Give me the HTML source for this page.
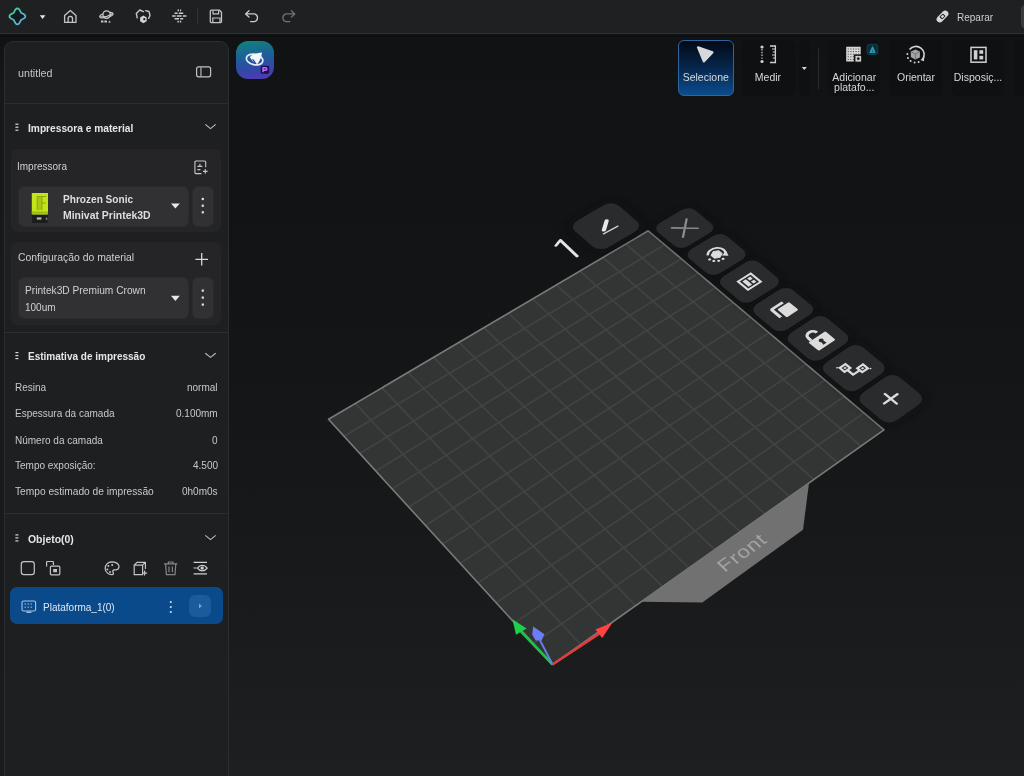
<!DOCTYPE html>
<html><head><meta charset="utf-8">
<style>
*{box-sizing:border-box;margin:0;padding:0}
html,body{width:1024px;height:776px;overflow:hidden;background:linear-gradient(180deg,#111214 0px,#131416 300px,#17181a 520px,#1e1f21 776px);font-family:"Liberation Sans",sans-serif;color:#d0d0d0}
.a{position:absolute}
.t{position:absolute;line-height:13.4px;white-space:nowrap;font-size:10px;will-change:transform}
.b{font-weight:bold}
svg{position:absolute;overflow:visible}
#hdr{left:0;top:0;width:1024px;height:34px;background:#1f2022;border-bottom:1px solid #2f3032}
#panel{left:4px;top:41px;width:225px;height:760px;background:#1e1f21;border:1px solid #2c2d30;border-radius:9px 9px 0 0}
.div{position:absolute;left:4px;width:225px;height:1px;background:#2c2d30}
.card{position:absolute;left:11px;width:210px;background:#252527;border-radius:7px}
.dd{position:absolute;background:#313134;border-radius:6px;border:1px solid #2b2b2e}
.tb{position:absolute;top:40px;height:56px;background:#0f1012;border-radius:6px}
.tbl{position:absolute;width:100%;text-align:center;font-size:10.5px;line-height:10px;color:#d8d8d8;will-change:transform}
</style></head><body>
<div id="hdr" class="a"></div>
<!-- header icons -->
<svg width="1024" height="34" style="left:0;top:0">
  <defs>
    <linearGradient id="lg" x1="0" y1="0" x2="1" y2="1">
      <stop offset="0" stop-color="#3ed89a"/><stop offset="0.55" stop-color="#5ab8c0"/><stop offset="1" stop-color="#7a9ee8"/>
    </linearGradient>
  </defs>
  <path d="M17.40 8.35 C19.70 8.35 20.40 11.75 21.00 12.75 C22.00 13.35 25.40 14.05 25.40 16.35 C25.40 18.65 22.00 19.35 21.00 19.95 C20.40 20.95 19.70 24.35 17.40 24.35 C15.10 24.35 14.40 20.95 13.80 19.95 C12.80 19.35 9.40 18.65 9.40 16.35 C9.40 14.05 12.80 13.35 13.80 12.75 C14.40 11.75 15.10 8.35 17.40 8.35Z" fill="#101a20" stroke="url(#lg)" stroke-width="1.7"/>
  <path d="M39.8 15.2 L45.4 15.2 L42.6 19Z" fill="#e8e8e8"/>
  <!-- home -->
  <path d="M64.6 15.6 L70.3 10.4 L76 15.6 L76 22.3 L64.6 22.3Z" fill="none" stroke="#c4c4c4" stroke-width="1.3" stroke-linejoin="round"/>
  <path d="M68.1 22.3 L68.1 18.6 A2.2 2.2 0 0 1 72.5 18.6 L72.5 22.3" fill="none" stroke="#c4c4c4" stroke-width="1.3"/>
  <!-- planet -->
  <ellipse cx="106.4" cy="15.2" rx="6.9" ry="2.1" transform="rotate(-14 106.4 15.2)" fill="none" stroke="#c8c8c8" stroke-width="1.2"/>
  <circle cx="106.6" cy="14.6" r="3.7" fill="#1f2022" stroke="#c8c8c8" stroke-width="1.3"/>
  <path d="M100.2 16.8 Q106.6 17.6 112.6 13.4" fill="none" stroke="#c8c8c8" stroke-width="1.2"/>
  <path d="M101 20.6 h2.4 v1.9 h-2.4z M104.4 20.6 h2.6 v1.9 h-2.6z M108.2 22.5 l1.3-2 l1.3 2z" fill="#c8c8c8"/>
  <!-- cloud hex -->
  <path d="M137.2 17.8 L136.3 13.4 L139.8 10 L143.4 11.6 M145.6 10.6 L148.9 11.5 L150 15.2 L148.7 18.4" fill="none" stroke="#c8c8c8" stroke-width="1.4" stroke-linecap="round" stroke-linejoin="round"/>
  <polygon points="146.69,21.30 143.40,23.20 140.11,21.30 140.11,17.50 143.40,15.60 146.69,17.50" fill="#d2d2d2"/>
  <circle cx="144.3" cy="19.2" r="1.1" fill="#1f2022"/>
  <!-- slice diamond -->
  <g stroke="#cfcfcf" stroke-width="1.6">
    <path d="M177.6 10.4 h1.4 M180 10.4 h1.2"/>
    <path d="M174.6 13.2 h3 M178.8 13.2 h4.4"/>
    <path d="M172.2 16 h3.4 M176.8 16 h4.8 M182.8 16 h3.6"/>
    <path d="M174.6 18.8 h4.4 M180.2 18.8 h3"/>
    <path d="M177.4 21.6 h1.4 M179.8 21.6 h1.4"/>
  </g>
  <rect x="197" y="8.5" width="1" height="15" fill="#34353a"/>
  <!-- save -->
  <path d="M210.3 11.2 a1 1 0 0 1 1-1 h8.2 l2 2 v9.4 a1 1 0 0 1 -1 1 h-9.2 a1 1 0 0 1 -1-1z" fill="none" stroke="#c4c4c4" stroke-width="1.3"/>
  <path d="M213 10.4 v3.4 h5.6 v-3.4 M212.8 22.2 v-4.2 h7.2 v4.2" fill="none" stroke="#c4c4c4" stroke-width="1.2"/>
  <!-- undo -->
  <path d="M249 10.8 L245.6 13.9 L249 17 M246 13.9 H254.6 A4 4 0 0 1 254.6 21.6 H250.5" fill="none" stroke="#cacaca" stroke-width="1.3" stroke-linecap="round" stroke-linejoin="round"/>
  <!-- redo -->
  <path d="M291.4 10.8 L294.8 13.9 L291.4 17 M294.4 13.9 H285.8 A4 4 0 0 0 285.8 21.6 H289.9" fill="none" stroke="#707174" stroke-width="1.3" stroke-linecap="round" stroke-linejoin="round"/>
  <!-- band-aid -->
  <g transform="rotate(-45 942.5 16.5)">
    <rect x="935.5" y="13.3" width="14" height="6.4" rx="3.2" fill="#d8d8d8"/>
    <rect x="940" y="14.6" width="5" height="3.8" rx="0.8" fill="#1f2023"/>
    <rect x="941" y="15.4" width="3" height="2.2" fill="#d8d8d8"/>
  </g>
  <rect x="1021" y="4.5" width="12" height="24.5" rx="5" fill="#3a3b3e"/>
</svg>
<div class="t" style="left:956.5px;top:10.7px;font-size:10px;color:#cfcfcf">Reparar</div>

<!-- left panel -->
<div class="a" style="left:0;top:35px;width:1024px;height:2px;background:#0d0e10"></div>
<div class="a" style="left:0;top:37px;width:4px;height:740px;background:linear-gradient(180deg,#111214,#17181a 60px,#1a1b1d)"></div>
<div id="panel" class="a"></div>
<div class="t" style="left:17.5px;top:67px;font-size:10.7px;color:#c4c4c4">untitled</div>
<svg width="20" height="20" style="left:0;top:0">
</svg>
<svg width="230" height="740" style="left:0;top:0">
  <rect x="196.6" y="66.8" width="14" height="10" rx="2" fill="none" stroke="#c4c4c4" stroke-width="1.2"/>
  <rect x="200.4" y="67.2" width="1.1" height="9.2" fill="#c4c4c4"/>
  <!-- handles -->
  <g fill="#d8d8d8">
    <rect x="15.4" y="123.6" width="3" height="1.2"/><rect x="15.4" y="126.6" width="3" height="1.2"/><rect x="15.4" y="129.6" width="3" height="1.2"/>
    <rect x="15.4" y="352" width="3" height="1.2"/><rect x="15.4" y="355" width="3" height="1.2"/><rect x="15.4" y="358" width="3" height="1.2"/>
    <rect x="15.4" y="534.3" width="3" height="1.2"/><rect x="15.4" y="537.3" width="3" height="1.2"/><rect x="15.4" y="540.3" width="3" height="1.2"/>
  </g>
  <g fill="none" stroke="#bdbdbd" stroke-width="1.1">
    <path d="M205.3 124.4 L210.5 128.6 L215.7 124.4"/>
    <path d="M205.3 353.2 L210.5 357.4 L215.7 353.2"/>
    <path d="M205.3 535.4 L210.5 539.6 L215.7 535.4"/>
  </g>
</svg>
<div class="div" style="top:103px"></div>
<div class="t b" style="font-size:10.2px;left:28px;top:121.5px;color:#e6e6e6">Impressora e material</div>

<div class="card" style="top:149px;height:83px"></div>
<div class="t" style="left:17.4px;top:159.5px;color:#cfcfcf">Impressora</div>
<svg width="230" height="340" style="left:0;top:0">
  <path d="M201.5 173.6 h-5.6 a1 1 0 0 1 -1-1 v-10.6 a1 1 0 0 1 1-1 h8.8 a1 1 0 0 1 1 1 v5.2" fill="none" stroke="#c8c8c8" stroke-width="1.1"/>
  <path d="M197.4 166.4 h5 M199.9 163.8 v3 M197.4 169.6 h3" stroke="#c8c8c8" stroke-width="1.1"/>
  <path d="M203 171.4 h4.6 M205.3 169.1 v4.6" stroke="#c8c8c8" stroke-width="1.1"/>
</svg>
<div class="dd" style="left:18px;top:185.5px;width:171px;height:41px"></div>
<div class="dd" style="left:192px;top:185.5px;width:21.5px;height:41.5px"></div>
<svg width="230" height="340" style="left:0;top:0">
  <!-- printer image -->
  <path d="M31.8 193 h16.2 v20.6 l-0.8 1.4 h-14.6 l-0.8-1.4z" fill="#c4e41a"/>
  <path d="M37.2 196.5 h4.8 v13.5 h-4.8z" fill="#a8c614"/>
  <path d="M37.2 196.5 v13.5 M42 196.5 v13.5 M37.2 196.5 h9 M42 203 h4" stroke="#7e9a0a" stroke-width="0.8" fill="none"/>
  <path d="M31.8 211.5 h16.2 v2.2 h-16.2z" fill="#9cb812"/>
  <rect x="32.2" y="214.6" width="15.4" height="8.4" fill="#1b1c1e"/>
  <rect x="36.8" y="217.4" width="4.6" height="2.2" fill="#b8b8b8"/>
  <path d="M45.4 219.6 l1.2-2.4 l1 2.4z" fill="#9a9a9a"/>
  <path d="M171 203.4 h8.8 l-4.4 5.2z M171 295.8 h8.8 l-4.4 5.2z" fill="#e8e8e8"/>
  <g fill="#e0e0e0">
    <rect x="201.7" y="197.9" width="2.2" height="2.2"/><rect x="201.7" y="204.6" width="2.2" height="2.2"/><rect x="201.7" y="211.2" width="2.2" height="2.2"/>
    <rect x="201.7" y="289.5" width="2.2" height="2.2"/><rect x="201.7" y="296.5" width="2.2" height="2.2"/><rect x="201.7" y="303.5" width="2.2" height="2.2"/>
  </g>
</svg>
<div class="t b" style="font-size:10.1px;left:63px;top:192.5px;color:#dedede">Phrozen Sonic</div>
<div class="t b" style="font-size:10.45px;left:63px;top:209px;color:#dedede">Minivat Printek3D</div>

<div class="card" style="top:241.5px;height:83.5px"></div>
<div class="t" style="font-size:10.4px;left:17.5px;top:251.3px;color:#cfcfcf">Configuração do material</div>
<div class="dd" style="left:17.5px;top:276.5px;width:171.5px;height:42px"></div>
<div class="dd" style="left:192px;top:276.5px;width:21.5px;height:42px"></div>
<svg width="230" height="340" style="left:0;top:0">
  <path d="M195.4 259.3 h12.6 M201.7 253 v12.6" stroke="#d8d8d8" stroke-width="1.3"/>
  <path d="M171 295.8 h8.8 l-4.4 5.2z" fill="#e8e8e8"/>
  <g fill="#e0e0e0">
    <rect x="201.7" y="289.5" width="2.2" height="2.2"/><rect x="201.7" y="296.5" width="2.2" height="2.2"/><rect x="201.7" y="303.5" width="2.2" height="2.2"/>
  </g>
</svg>
<div class="t" style="font-size:10.2px;left:24.7px;top:284.4px;color:#d0d0d0">Printek3D Premium Crown</div>
<div class="t" style="left:24.7px;top:301.4px;color:#d0d0d0">100um</div>

<div class="div" style="top:332px"></div>
<div class="t b" style="left:28px;top:350.2px;color:#e6e6e6">Estimativa de impressão</div>

<div class="t" style="left:14.6px;top:381.2px;color:#c8c8c8">Resina</div>
<div class="t" style="font-size:10px;left:14.6px;top:407px;color:#c8c8c8">Espessura da camada</div>
<div class="t" style="left:14.6px;top:433.5px;color:#c8c8c8">Número da camada</div>
<div class="t" style="left:14.6px;top:459.3px;color:#c8c8c8">Tempo exposição:</div>
<div class="t" style="font-size:10.2px;left:14.6px;top:485.2px;color:#c8c8c8">Tempo estimado de impressão</div>
<div class="t" style="right:806px;top:381.2px;color:#c8c8c8">normal</div>
<div class="t" style="right:806px;top:407px;color:#c8c8c8">0.100mm</div>
<div class="t" style="right:806px;top:433.5px;color:#c8c8c8">0</div>
<div class="t" style="right:806px;top:459.3px;color:#c8c8c8">4.500</div>
<div class="t" style="right:806px;top:485.2px;color:#c8c8c8">0h0m0s</div>

<div class="div" style="top:513px"></div>
<div class="t b" style="font-size:10.45px;left:28px;top:532.5px;color:#e6e6e6">Objeto(0)</div>
<svg width="230" height="640" style="left:0;top:0">
  <g fill="none" stroke="#c4c4c4" stroke-width="1.2">
    <rect x="21.3" y="561.6" width="13" height="13" rx="2.6"/>
    <path d="M46.6 566.5 v-4.2 a0.8 0.8 0 0 1 0.8-0.8 h5.2 a0.8 0.8 0 0 1 0.8 0.8 v2.6"/>
    <rect x="50.4" y="566.2" width="9.4" height="8.6" rx="1"/>
    <path d="M111.6 561.8 a6.6 6.4 0 1 0 0.4 12.8 c1.6 0 1.8-1.4 1-2.4 c-0.8-1 0-2.4 1.4-2.4 h1.6 a3.4 3.4 0 0 0 3-3.4 c0-2.6-3.4-4.6-7.4-4.6z"/>
    <path d="M134.2 565.2 l2.8-2.8 h8.4 v6.6 M134.2 565.2 h8.4 v9.4 h-8.4z M142.6 565.2 l2.8-2.8"/>
    <path d="M144.6 570.6 v5 M142.1 573.1 h5"/>
    <path d="M164 563.8 h13.4 M168.4 563.6 v-1.6 h4.6 v1.6 M165.6 564 l0.8 10.6 h8.6 l0.8-10.6 M169 566.6 v5.6 M172.4 566.6 v5.6" stroke="#858585"/>
  </g>
  <rect x="49.2" y="568.6" width="3.6" height="3.6" fill="#c4c4c4" opacity="0"/>
  <g fill="#c4c4c4">
    <circle cx="108.4" cy="566" r="1"/><circle cx="112.2" cy="565" r="1"/><circle cx="107.4" cy="569.6" r="1"/><circle cx="110" cy="572" r="1"/>
    <rect x="53.2" y="569" width="3.8" height="3.2"/>
  </g>
  <g fill="none" stroke="#d0d0d0" stroke-width="1.2">
    <path d="M193.6 562.4 h13.4 M193.6 573.8 h13.4 M193.6 568 h3"/>
    <path d="M197.4 568.1 c2.6-3.6 7.2-3.6 9.8 0 c-2.6 3.6-7.2 3.6-9.8 0z"/>
  </g>
  <circle cx="202.2" cy="568.1" r="1.7" fill="#d0d0d0"/>
</svg>

<div class="a" style="left:10px;top:587px;width:212.5px;height:36.6px;background:#0a4a8a;border-radius:7px"></div>
<div class="a" style="left:188.7px;top:594.6px;width:22.5px;height:22.7px;background:#1a5b9c;border-radius:6px"></div>
<svg width="230" height="640" style="left:0;top:0">
  <rect x="22" y="601" width="13.6" height="10" rx="1.6" fill="none" stroke="#a8c4e4" stroke-width="1.1"/>
  <g fill="#a8c4e4">
    <rect x="24.6" y="603.4" width="1.2" height="1.2"/><rect x="27.6" y="603.4" width="1.2" height="1.2"/><rect x="30.6" y="603.4" width="1.2" height="1.2"/>
    <rect x="24.6" y="606.6" width="1.2" height="1.2"/><rect x="27.6" y="606.6" width="1.2" height="1.2"/><rect x="30.6" y="606.6" width="1.2" height="1.2"/>
    <rect x="26.4" y="611.6" width="5" height="1.3"/>
  </g>
  <g fill="#c8dcf0">
    <circle cx="170.8" cy="602" r="1.1"/><circle cx="170.8" cy="607" r="1.1"/><circle cx="170.8" cy="612" r="1.1"/>
  </g>
  <path d="M199 603.6 l2.8 2.4 l-2.8 2.4z" fill="#7aa6d6"/>
</svg>
<div class="t" style="font-size:10px;left:42.7px;top:601px;color:#dce8f4">Plataforma_1(0)</div>

<!-- 3D viewport -->
<svg width="1024" height="776" style="left:0;top:0">
  <polygon points="328.5,419.3 648.2,230.8 884.0,429.8 552.6,664.5" fill="#333534"/>
  <path d="M355.4 403.4L580.8 644.5M381.9 387.8L608.5 624.9M408.0 372.4L635.7 605.6M433.7 357.3L662.5 586.7M459.0 342.4L688.8 568.0M483.9 327.7L714.6 549.7M508.4 313.2L740.1 531.7M532.6 299.0L765.0 514.0M556.4 284.9L789.6 496.6M579.9 271.1L813.8 479.5M603.0 257.5L837.6 462.7M625.8 244.0L861.0 446.1M344.0 436.2L664.7 244.7M359.7 453.5L681.4 258.8M375.8 471.0L698.4 273.2M392.1 488.9L715.6 287.7M408.7 507.0L733.2 302.5M425.5 525.5L751.0 317.5M442.7 544.3L769.1 332.8M460.2 563.4L787.4 348.3M478.0 582.9L806.1 364.1M496.2 602.7L825.1 380.1M514.6 622.9L844.4 396.4M533.4 643.5L864.0 413.0" stroke="#414342" stroke-width="1.7" fill="none"/>
  <polygon points="328.5,419.3 648.2,230.8 884.0,429.8 552.6,664.5" fill="none" stroke="#7a7a7b" stroke-width="1.6" stroke-linejoin="round"/>
  <!-- axes -->
  <path d="M552.6 664.5 L521 631.5" stroke="#22c04a" stroke-width="2.6"/>
  <path d="M512.4 619.2 L516 634.8 L526.6 628.4Z" fill="#1fd04c"/>
  <path d="M552.6 664.5 L539.8 640" stroke="#6a7ef0" stroke-width="1.8"/>
  <path d="M533.2 626.4 L544.4 634.2 L541.6 640.4 L535.6 640.4 L532.2 634.4Z" fill="#6b7df8"/>
  <path d="M552.6 664.5 L599.2 633.6" stroke="#e23c3c" stroke-width="2.6"/>
  <path d="M612.6 622.6 L595.4 629.6 L602.2 638Z" fill="#ff4242"/>
</svg>
<!-- app logo -->
<div class="a" style="left:236px;top:40.5px;width:37.5px;height:38.5px;border-radius:12px;background:linear-gradient(172deg,#11847a 0%,#1d5f98 40%,#2f4aa8 68%,#5538b4 100%)"></div>
<svg width="40" height="40" style="left:236px;top:40px">
  <ellipse cx="18.6" cy="19.5" rx="8.4" ry="5.2" transform="rotate(12 18.6 19.5)" fill="none" stroke="#e6eaf6" stroke-width="1.7"/>
  <path d="M13.8 17.2 C16 14.5 21 13 26 12.6 C25.4 17 24 21.5 21 24.4 L19.4 22 L17 21.4Z" fill="#f6f6fa"/>
  <path d="M16.5 19.5 l2.4 2.2" stroke="#2a4fa0" stroke-width="1.2"/>
  <rect x="24.6" y="25.8" width="8.6" height="8" rx="1.6" fill="#250a50"/>
  <path d="M27 32.3 v-4.6 h2.6 a1.3 1.3 0 0 1 0 2.6 h-2.6" fill="none" stroke="#b274ff" stroke-width="1.4"/>
</svg>

<!-- toolbar -->
<div class="tb" style="left:678px;width:55.5px;background:linear-gradient(180deg,#030a16 0%,#06264c 50%,#0b4d8e 100%);border:1px solid #2f659e"></div>
<svg width="30" height="30" style="left:690px;top:40px">
  <path d="M8 7.4 L22.4 12.4 L13.8 21.4Z" fill="#d8d8dc" stroke="#d8d8dc" stroke-width="2.2" stroke-linejoin="round"/>
</svg>
<div class="tbl" style="left:678px;width:55.5px;top:71.5px;position:absolute">Selecione</div>
<div class="tb" style="left:741px;width:54px"></div>
<div class="tb" style="left:798.5px;width:12px"></div>
<svg width="80" height="30" style="left:740px;top:40px">
  <circle cx="22" cy="7" r="1.6" fill="#d0d0d0"/><circle cx="22" cy="21.5" r="1.6" fill="#d0d0d0"/>
  <path d="M22 9 v11" stroke="#d0d0d0" stroke-width="1.2" stroke-dasharray="1.4 1.4"/>
  <path d="M30 6 h5.4 v16.5 h-5.4" fill="none" stroke="#d0d0d0" stroke-width="1.3"/>
  <path d="M32 9 h3.4 M32.8 12 h2.6 M32 15 h3.4 M32.8 18 h2.6" stroke="#d0d0d0" stroke-width="1.1"/>
  <path d="M61.8 27 h5 l-2.5 3z" fill="#d8d8d8"/>
</svg>
<div class="tbl" style="left:741px;width:54px;top:71.5px">Medir</div>
<div class="a" style="left:818px;top:48px;width:1px;height:41px;background:#2a2b2e"></div>

<div class="tb" style="left:827.5px;width:52.5px"></div>
<svg width="60" height="30" style="left:827px;top:40px">
  <path d="M19.2 6.8 H33.7 V14.4 H26.8 V21.5 H19.2Z" fill="#d6d6d6"/>
  <g fill="#3a3a3a"><rect x="20.7" y="8.55" width="1.1" height="0.9"/><rect x="23.3" y="8.55" width="1.1" height="0.9"/><rect x="25.9" y="8.55" width="1.1" height="0.9"/><rect x="28.5" y="8.55" width="1.1" height="0.9"/><rect x="31.1" y="8.55" width="1.1" height="0.9"/><rect x="20.7" y="11.15" width="1.1" height="0.9"/><rect x="23.3" y="11.15" width="1.1" height="0.9"/><rect x="25.9" y="11.15" width="1.1" height="0.9"/><rect x="28.5" y="11.15" width="1.1" height="0.9"/><rect x="31.1" y="11.15" width="1.1" height="0.9"/><rect x="20.7" y="13.75" width="1.1" height="0.9"/><rect x="23.3" y="13.75" width="1.1" height="0.9"/><rect x="25.9" y="13.75" width="1.1" height="0.9"/><rect x="28.5" y="13.75" width="1.1" height="0.9"/><rect x="31.1" y="13.75" width="1.1" height="0.9"/><rect x="20.7" y="16.35" width="1.1" height="0.9"/><rect x="23.3" y="16.35" width="1.1" height="0.9"/><rect x="25.9" y="16.35" width="1.1" height="0.9"/><rect x="20.7" y="18.95" width="1.1" height="0.9"/><rect x="23.3" y="18.95" width="1.1" height="0.9"/><rect x="25.9" y="18.95" width="1.1" height="0.9"/></g>
  <rect x="27.9" y="15.3" width="6.8" height="6.8" fill="#d0d0d0" stroke="#0f1012" stroke-width="1"/>
  <circle cx="31.3" cy="18.7" r="1.4" fill="#202020"/>
  <rect x="40.2" y="4.3" width="10.6" height="10.2" rx="2" fill="#0a2a36" stroke="#17495a" stroke-width="0.8"/>
  <path d="M42.8 12.6 L45.5 6.6 L48.2 12.6Z" fill="#2a9cb0" stroke="#2a9cb0" stroke-width="1" stroke-linejoin="round"/><path d="M44.8 11.6 L45.5 10 L46.2 11.6Z" fill="#0a2a36"/>
</svg>
<div class="tbl" style="left:827.5px;width:52.5px;top:71.5px">Adicionar</div>
<div class="tbl" style="left:827.5px;width:52.5px;top:82.3px">platafo...</div>

<div class="tb" style="left:889px;width:54px"></div>
<svg width="60" height="30" style="left:889px;top:40px">
  <path d="M20.5 9.6 A8 8 0 1 1 33.5 19.5" fill="none" stroke="#d0d0d0" stroke-width="1.6"/>
  <path d="M31.4 20 l3.6 1.2 l0.2-4z" fill="#d0d0d0"/>
  <g fill="#d0d0d0"><circle cx="18.4" cy="14" r="1"/><circle cx="19" cy="18" r="1"/><circle cx="21.6" cy="21" r="1"/><circle cx="25.6" cy="22.6" r="1"/><circle cx="29.6" cy="22" r="1"/></g>
  <path d="M21.8 11.6 L26.6 9.4 L31 11.8 L30.8 17.4 L26.2 19.6 L21.8 17Z" fill="#a4a4a4"/>
  <path d="M21.8 11.6 L26.4 14 L31 11.8 M26.4 14 v5.6" fill="none" stroke="#6a6a6a" stroke-width="0.8"/>
</svg>
<div class="tbl" style="left:889px;width:54px;top:71.5px">Orientar</div>

<div class="tb" style="left:952px;width:52px"></div>
<svg width="60" height="30" style="left:952px;top:40px">
  <rect x="19" y="7.4" width="15" height="14.8" fill="none" stroke="#d0d0d0" stroke-width="1.5"/>
  <rect x="21.8" y="10.2" width="3.6" height="9.2" fill="#d0d0d0"/>
  <rect x="27.4" y="10.2" width="3.8" height="3.6" fill="#d0d0d0"/>
  <rect x="27.4" y="15.8" width="3.8" height="3.6" fill="#d0d0d0"/>
</svg>
<div class="tbl" style="left:952px;width:52px;top:71.5px">Disposiç...</div>
<div class="tb" style="left:1013.5px;width:30px"></div>

<!-- plate-side buttons -->
<svg width="1024" height="776" style="left:0;top:0"><polygon points="641.1,601.8 702.3,602.6 803.0,529.8 809.0,482.9" fill="#717172"/>
<g transform="matrix(0.8273 -0.5921 0.6526 0.6219 711.30 552.96)"><text x="21" y="27" text-anchor="middle" font-size="21" fill="#a4a4a4" font-family="Liberation Sans" textLength="52">Front</text></g>
<defs><filter id="sh" x="-30%" y="-30%" width="160%" height="160%"><feGaussianBlur stdDeviation="3.2"/></filter></defs>
<g transform="matrix(0.9290 -0.5535 0.7014 0.5811 652.18 227.53)"><rect x="-4" y="-4" width="48" height="48" rx="11.5" fill="#0a0a0c" opacity="0.35" filter="url(#sh)"/></g>
<g transform="matrix(0.9326 -0.5697 0.7219 0.5982 683.53 253.90)"><rect x="-4" y="-4" width="48" height="48" rx="11.5" fill="#0a0a0c" opacity="0.35" filter="url(#sh)"/></g>
<g transform="matrix(0.9361 -0.5866 0.7434 0.6160 715.80 281.03)"><rect x="-4" y="-4" width="48" height="48" rx="11.5" fill="#0a0a0c" opacity="0.35" filter="url(#sh)"/></g>
<g transform="matrix(0.9394 -0.6043 0.7658 0.6346 749.05 308.99)"><rect x="-4" y="-4" width="48" height="48" rx="11.5" fill="#0a0a0c" opacity="0.35" filter="url(#sh)"/></g>
<g transform="matrix(0.9425 -0.6228 0.7893 0.6540 783.30 337.79)"><rect x="-4" y="-4" width="48" height="48" rx="11.5" fill="#0a0a0c" opacity="0.35" filter="url(#sh)"/></g>
<g transform="matrix(0.9452 -0.6422 0.8139 0.6744 818.61 367.48)"><rect x="-4" y="-4" width="48" height="48" rx="11.5" fill="#0a0a0c" opacity="0.35" filter="url(#sh)"/></g>
<g transform="matrix(0.9478 -0.6625 0.8396 0.6957 855.03 398.10)"><rect x="-4" y="-4" width="48" height="48" rx="11.5" fill="#0a0a0c" opacity="0.35" filter="url(#sh)"/></g>
<g transform="matrix(1.0984 -0.6373 0.7793 0.6691 568.41 225.59)"><rect x="-4" y="-4" width="48" height="48" rx="11.5" fill="#0a0a0c" opacity="0.35" filter="url(#sh)"/></g>
<g transform="matrix(0.9290 -0.5535 0.7014 0.5811 652.18 227.53)"><rect x="0" y="0" width="40" height="40" rx="8.5" fill="#2a2b2d"/><path d="M12 12 L28 28 M28 12 L12 28" stroke="#8c8c8c" stroke-width="2" fill="none" stroke-linecap="round"/></g>
<g transform="matrix(0.9326 -0.5697 0.7219 0.5982 683.53 253.90)"><rect x="0" y="0" width="40" height="40" rx="8.5" fill="#2a2b2d"/><path d="M13.9 15.7 A7.5 7.5 0 1 1 25.7 24.8" fill="none" stroke="#dcdcdc" stroke-width="2.1"/><path d="M28.6 22.2 L26.4 28.2 L22.6 24Z" fill="#dcdcdc"/><path d="M20 15.2 L24.2 17.6 L24.2 22.4 L20 24.8 L15.8 22.4 L15.8 17.6Z" fill="#dcdcdc" stroke="#dcdcdc" stroke-width="0.8" stroke-linejoin="round"/><g fill="#dcdcdc"><circle cx="20.7" cy="28" r="1.3"/><circle cx="16.6" cy="27.3" r="1.3"/><circle cx="13.4" cy="24.6" r="1.3"/><circle cx="12" cy="20.7" r="1.3"/></g></g>
<g transform="matrix(0.9361 -0.5866 0.7434 0.6160 715.80 281.03)"><rect x="0" y="0" width="40" height="40" rx="8.5" fill="#2a2b2d"/><rect x="13.2" y="13.2" width="13.6" height="13.6" fill="none" stroke="#dcdcdc" stroke-width="2"/><rect x="15.8" y="15.8" width="3.8" height="8.4" fill="#dcdcdc"/><rect x="21" y="15.8" width="3.2" height="3.4" fill="#dcdcdc"/><rect x="21" y="20.8" width="3.2" height="3.4" fill="#dcdcdc"/></g>
<g transform="matrix(0.9394 -0.6043 0.7658 0.6346 749.05 308.99)"><rect x="0" y="0" width="40" height="40" rx="8.5" fill="#2a2b2d"/><path d="M13 25.5 V14.5 a1.2 1.2 0 0 1 1.2-1.2 H25" fill="none" stroke="#dcdcdc" stroke-width="2.8"/><rect x="16.5" y="16.5" width="12.5" height="12.5" rx="1.2" fill="#dcdcdc"/></g>
<g transform="matrix(0.9425 -0.6228 0.7893 0.6540 783.30 337.79)"><rect x="0" y="0" width="40" height="40" rx="8.5" fill="#2a2b2d"/><path d="M14.5 18 v-3.5 a4.5 4.5 0 0 1 9 0" fill="none" stroke="#dcdcdc" stroke-width="2.8"/><rect x="11.5" y="18" width="18" height="13" rx="1.2" fill="#dcdcdc"/><path d="M20.5 21.5 a2 2 0 0 1 1.1 3.7 l0.6 3.2 h-3.4 l0.6-3.2 a2 2 0 0 1 1.1-3.7z" fill="#2a2b2d"/></g>
<g transform="matrix(0.9452 -0.6422 0.8139 0.6744 818.61 367.48)"><rect x="0" y="0" width="40" height="40" rx="8.5" fill="#2a2b2d"/><g fill="none" stroke="#dcdcdc" stroke-width="2.1"><rect x="12" y="12" width="6" height="6"/><rect x="22" y="22" width="6" height="6"/><path d="M15 18 V25 H22"/></g><g fill="#dcdcdc"><circle cx="10.5" cy="10.5" r="0.8"/><circle cx="29.5" cy="29.5" r="0.8"/><rect x="14" y="14" width="2" height="2"/><rect x="24" y="24" width="2" height="2"/></g></g>
<g transform="matrix(0.9478 -0.6625 0.8396 0.6957 855.03 398.10)"><rect x="0" y="0" width="40" height="40" rx="8.5" fill="#2a2b2d"/><path d="M13 20 H27 M20 13 V27" stroke="#dcdcdc" stroke-width="2.2" fill="none" stroke-linecap="round"/></g>
<g transform="matrix(1.0984 -0.6373 0.7793 0.6691 568.41 225.59)"><rect x="0" y="0" width="40" height="40" rx="8.5" fill="#2a2b2d"/><path d="M23.8 15.5 L16.4 22.4" stroke="#e8e8e8" stroke-width="3.2" stroke-linecap="round"/><path d="M14 25.6 L26.3 26.1" stroke="#cfcfcf" stroke-width="1.5" stroke-linecap="round"/></g>
<g transform="matrix(0.7496 -0.4345 0.5158 0.4562 542.37 246.19)"><path d="M11.5 9.6 L20 5.8 L18.9 40" fill="none" stroke="#e4e4e4" stroke-width="3.6" stroke-linecap="round" stroke-linejoin="round"/></g></svg>
</body></html>
